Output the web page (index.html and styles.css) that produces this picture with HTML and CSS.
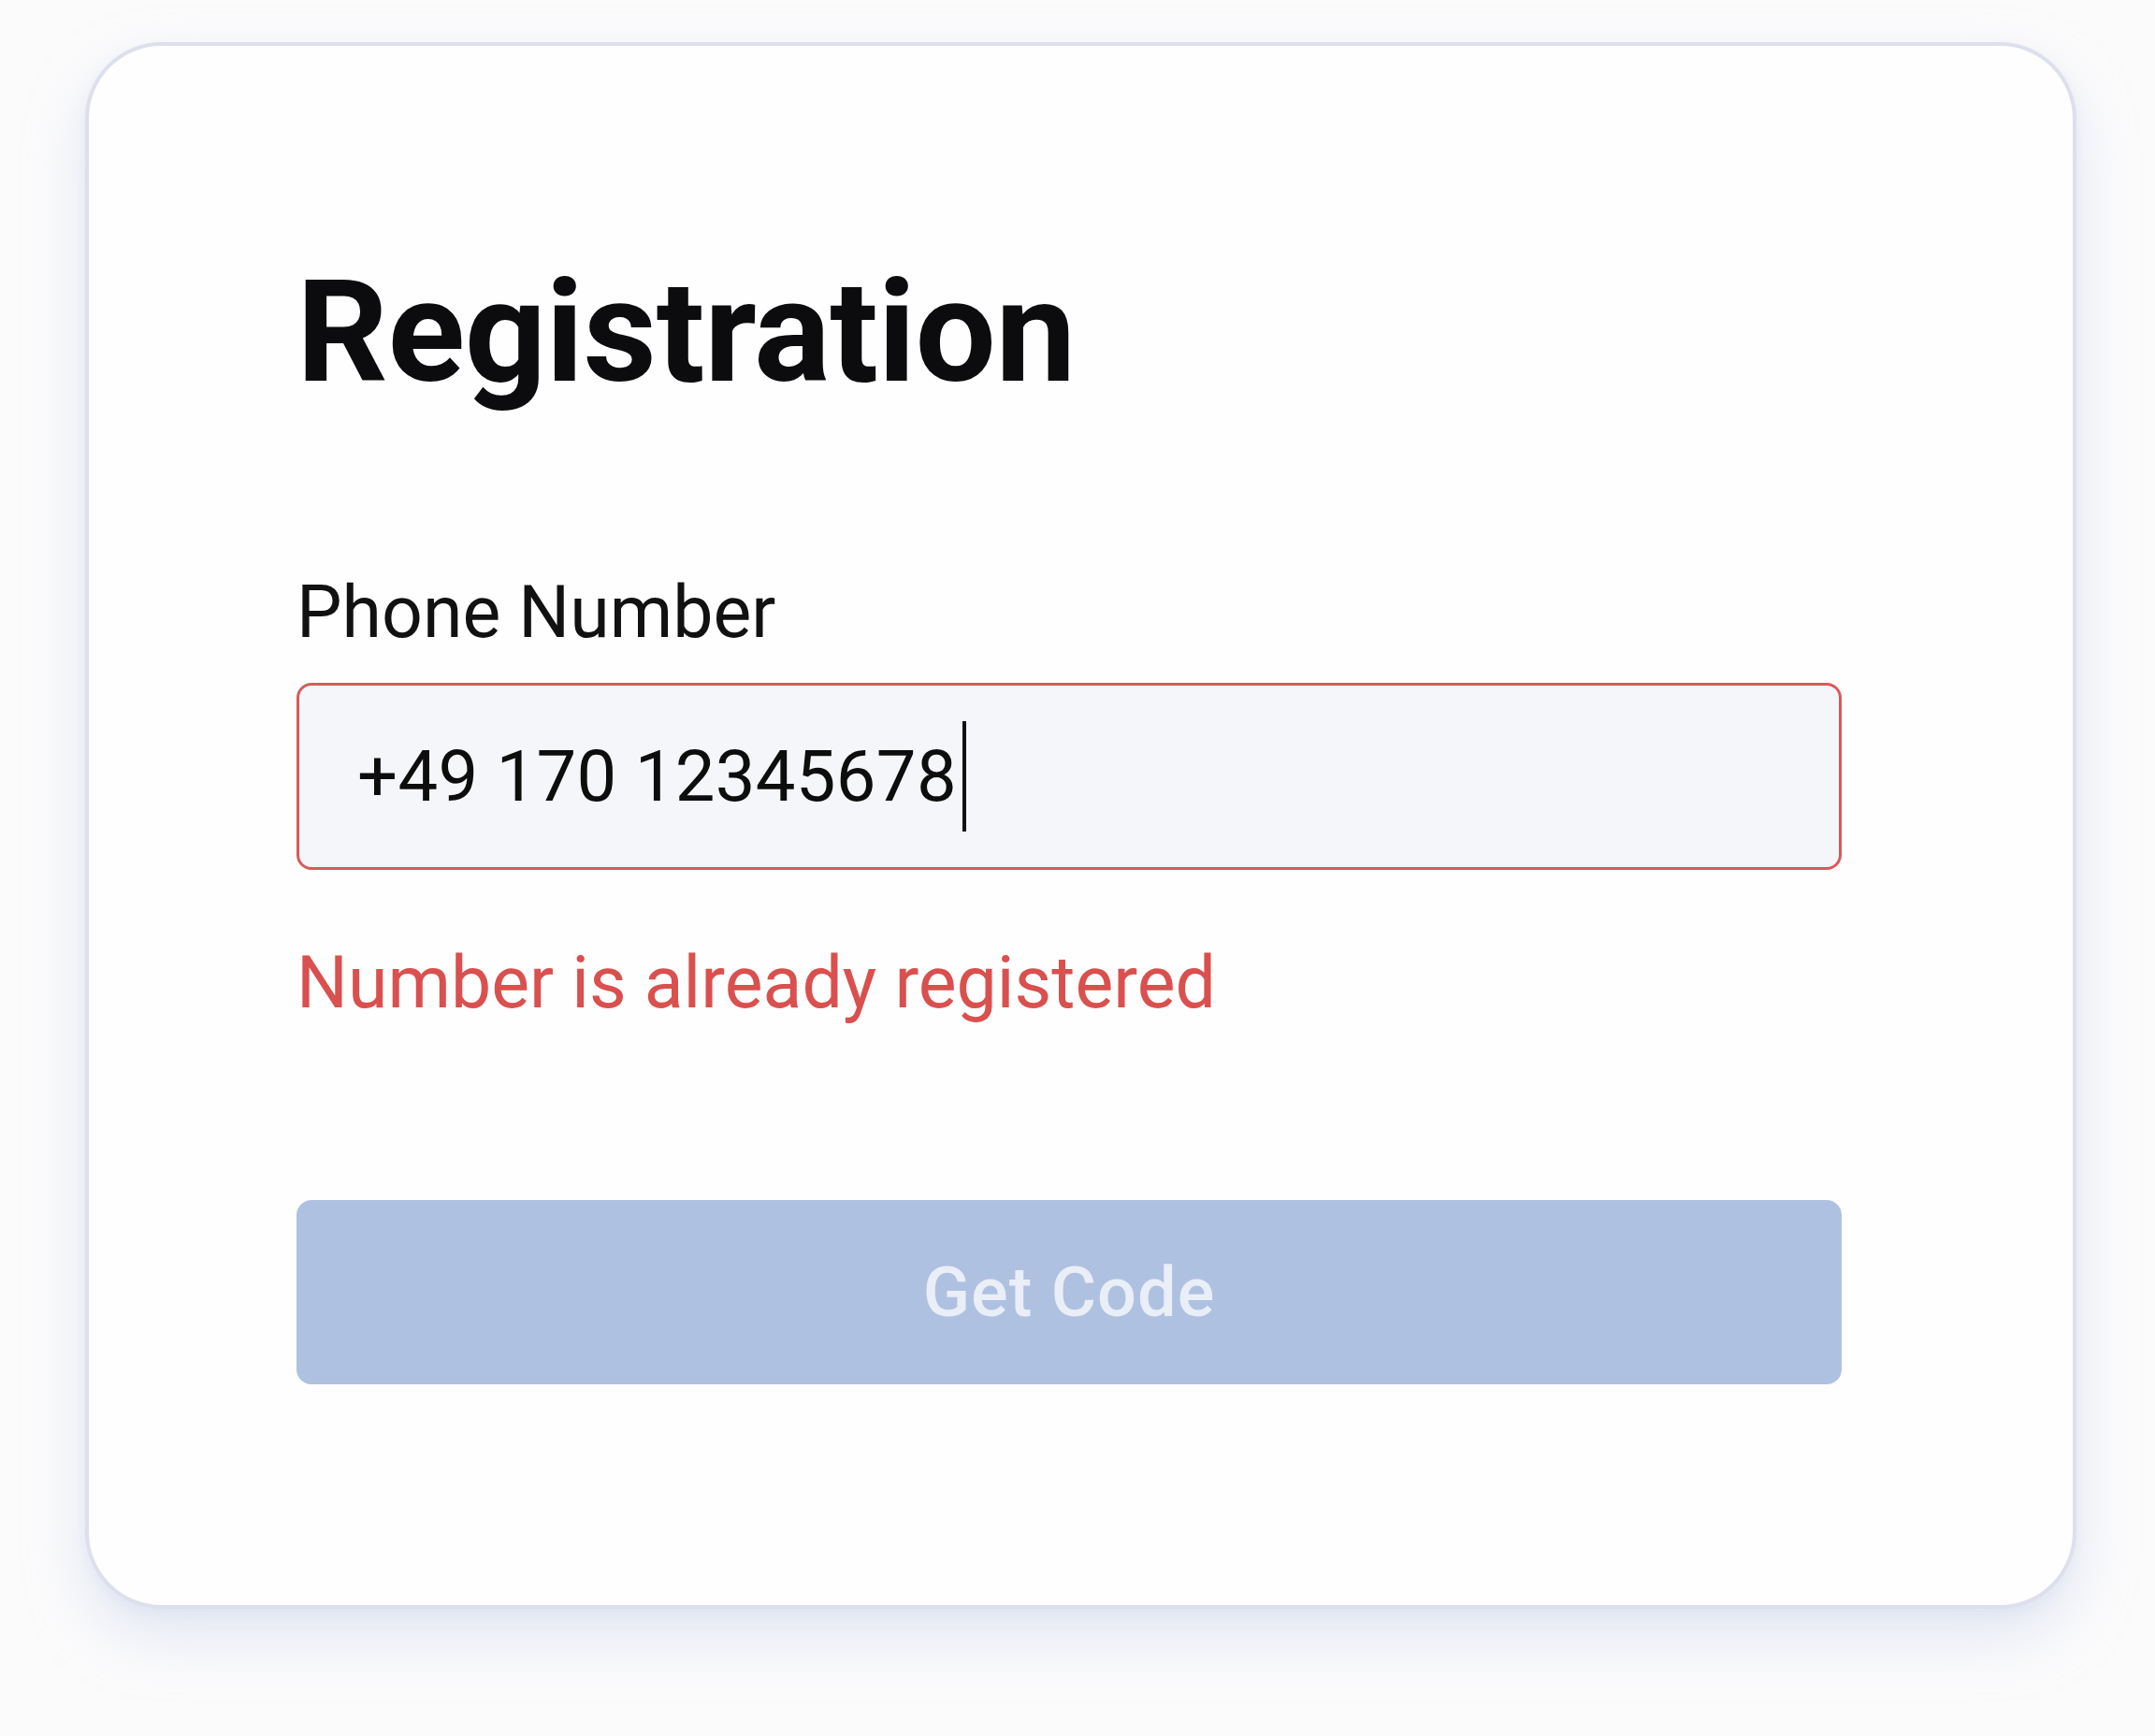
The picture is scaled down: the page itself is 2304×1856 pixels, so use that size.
FILE: index.html
```html
<!DOCTYPE html>
<html lang="en">
<head>
<meta charset="utf-8">
<title>Registration</title>
<link rel="stylesheet" href="styles.css">
</head>
<body>
  <main class="card">
    <h1 class="title">Registration</h1>
    <label class="label" for="phone">Phone Number</label>
    <div class="input is-error" id="phone">
      <span class="input-value">+49 170 12345678</span><span class="caret"></span>
    </div>
    <p class="error">Number is already registered</p>
    <button class="btn" type="button" disabled>Get Code</button>
  </main>
</body>
</html>
```

FILE: styles.css
```css
* {
  box-sizing: border-box;
}

html, body {
  margin: 0;
  padding: 0;
}

body {
  background: #fbfbfc;
  font-family: Roboto, "Liberation Sans", Arial, sans-serif;
  color: #111111;
  padding: 45px 0 0 91px;
  min-height: 1856px;
}

.card {
  width: 2129px;
  height: 1675px;
  background: #fefefe;
  border: 4px solid #dde0ec;
  border-radius: 82px;
  box-shadow: 0 30px 60px rgba(205, 214, 236, 0.5), 0 6px 14px rgba(215, 222, 240, 0.35);
  padding: 229px 247px 0 222px;
  display: flex;
  flex-direction: column;
}

.title {
  margin: 0;
  font-size: 153px;
  line-height: 1;
  font-weight: 700;
  color: #0c0c0e;
  letter-spacing: -0.5px;
}

.label {
  display: block;
  margin-top: 186px;
  font-size: 77px;
  line-height: 1;
  font-weight: 400;
  color: #111111;
}

.input {
  margin-top: 36px;
  height: 200px;
  border: 3px solid #d95a58;
  border-radius: 16px;
  background: #f5f6fa;
  display: flex;
  align-items: center;
  padding-left: 62px;
}

.input-value {
  font-size: 76px;
  line-height: 1;
  letter-spacing: 0.3px;
  color: #0d0d0d;
}

.caret {
  width: 4px;
  height: 118px;
  background: #111111;
  margin-left: 6px;
}

.error {
  margin: 83px 0 0;
  font-size: 77px;
  line-height: 1;
  color: #d9504e;
}

.btn {
  margin-top: 193px;
  height: 197px;
  width: 100%;
  border: none;
  border-radius: 16px;
  background: #afc1e1;
  color: rgba(255, 255, 255, 0.72);
  font-family: Roboto, "Liberation Sans", Arial, sans-serif;
  font-size: 74px;
  font-weight: 500;
  letter-spacing: 1px;
  line-height: 1;
  padding: 0;
}
```
